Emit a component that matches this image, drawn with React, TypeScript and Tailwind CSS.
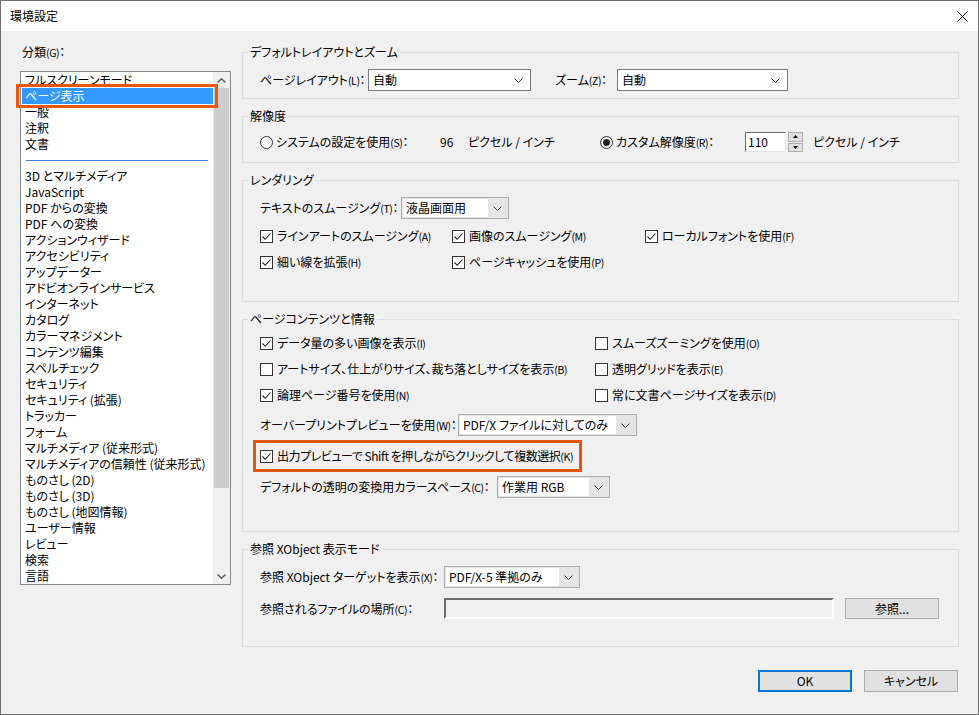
import type { ReactNode } from 'react';

// renders a label, shrinking the "(X)" access-key part like the Windows UI font does
function Lbl({ t }: { t: string }) {
  const m = t.match(/^(.*)\(([A-Z])\)(.*)$/);
  if (!m) return <>{t}</>;
  return (
    <>
      {m[1]}
      <span className="text-[10.5px] tracking-[-0.4px]">({m[2]})</span>
      {m[3]}
    </>
  );
}

const Chevron = () => (
  <svg width="9" height="5" viewBox="0 0 9 5" fill="none" stroke="#404040" strokeWidth="1">
    <path d="M0.5 0.5L4.5 4.5L8.5 0.5" />
  </svg>
);

function Check({ on, label }: { on?: boolean; label: string }) {
  return (
    <div className="flex h-[18px] items-center gap-[4px]">
      <span className="flex h-[13px] w-[13px] shrink-0 items-center justify-center border border-[#333] bg-white">
        {on && (
          <svg width="11" height="11" viewBox="0 0 11 11" fill="none" stroke="#222" strokeWidth="1.1">
            <path d="M1.5 5.5L4.2 8.3L9.5 2.5" />
          </svg>
        )}
      </span>
      <span className="whitespace-nowrap">
        <Lbl t={label} />
      </span>
    </div>
  );
}

function Radio({ on, label }: { on?: boolean; label: string }) {
  return (
    <div className="flex items-center gap-[3px]">
      <span className="flex h-[13px] w-[13px] shrink-0 items-center justify-center rounded-full border border-[#333] bg-white">
        {on && <span className="h-[7px] w-[7px] rounded-full bg-[#222]" />}
      </span>
      <span className="whitespace-nowrap">
        <Lbl t={label} />
      </span>
    </div>
  );
}

function WhiteSelect({ value, w }: { value: string; w: string }) {
  return (
    <div className={`flex h-[22px] items-center border border-[#7a7a7a] bg-white pl-[4px] pr-[7px] ${w}`}>
      <span className="flex-1 whitespace-nowrap">{value}</span>
      <Chevron />
    </div>
  );
}

function GraySelect({ value, w }: { value: string; w: string }) {
  return (
    <div className={`flex h-[22px] border border-[#adadad] bg-[#e5e5e5] p-[1px] ${w}`}>
      <span className="flex flex-1 items-center whitespace-nowrap bg-white pl-[3px]">{value}</span>
      <span className="flex w-[19px] items-center justify-center">
        <Chevron />
      </span>
    </div>
  );
}

function Group({ title, h, children }: { title: string; h: string; children: ReactNode }) {
  return (
    <fieldset className={`border border-[#dcdcdc] ${h}`}>
      <legend className="ml-[5px] px-[2px] leading-4">{title}</legend>
      <div className="pl-[17px]">{children}</div>
    </fieldset>
  );
}

function FieldLabel({ t, w }: { t: string; w: string }) {
  return (
    <span className={`whitespace-nowrap ${w}`}>
      <Lbl t={t} />
    </span>
  );
}

const categories = [
  '3D とマルチメディア',
  'JavaScript',
  'PDF からの変換',
  'PDF への変換',
  'アクションウィザード',
  'アクセシビリティ',
  'アップデーター',
  'アドビオンラインサービス',
  'インターネット',
  'カタログ',
  'カラーマネジメント',
  'コンテンツ編集',
  'スペルチェック',
  'セキュリティ',
  'セキュリティ (拡張)',
  'トラッカー',
  'フォーム',
  'マルチメディア (従来形式)',
  'マルチメディアの信頼性 (従来形式)',
  'ものさし (2D)',
  'ものさし (3D)',
  'ものさし (地図情報)',
  'ユーザー情報',
  'レビュー',
  '検索',
  '言語',
];

function CategoryList() {
  return (
    <div className="relative flex h-[514px] w-[211px] border border-[#828790] bg-white">
      <div className="flex-1 overflow-hidden">
        <div className="flex h-4 items-center pb-px pl-[4px] leading-4">フルスクリーンモード</div>
        <div className="ml-px flex h-4 items-center bg-[#3399ff] pb-px pl-[3px] leading-4 text-white">ページ表示</div>
        <div className="flex h-4 items-center pb-px pl-[4px] leading-4">一般</div>
        <div className="flex h-4 items-center pb-px pl-[4px] leading-4">注釈</div>
        <div className="flex h-4 items-center pb-px pl-[4px] leading-4">文書</div>
        <div className="flex h-4 items-center pl-[5px] pr-[5px]">
          <div className="h-px w-full bg-[#3b7fd4]" />
        </div>
        {categories.map((c) => (
          <div key={c} className="flex h-4 items-center whitespace-nowrap pb-px pl-[4px] leading-4">
            {c}
          </div>
        ))}
      </div>
      {/* scrollbar */}
      <div className="flex w-[17px] flex-col bg-[#f0f0f0]">
        <div className="flex h-[16px] items-center justify-center">
          <svg width="9" height="5" viewBox="0 0 9 5" fill="none" stroke="#555" strokeWidth="1.4">
            <path d="M0.5 4.5L4.5 0.8L8.5 4.5" />
          </svg>
        </div>
        <div className="mx-px h-[400px] bg-[#cdcdcd]" />
        <div className="flex-1" />
        <div className="flex h-[16px] items-center justify-center">
          <svg width="9" height="5" viewBox="0 0 9 5" fill="none" stroke="#555" strokeWidth="1.4">
            <path d="M0.5 0.5L4.5 4.2L8.5 0.5" />
          </svg>
        </div>
      </div>
      {/* highlight */}
      <div className="absolute left-[-5px] top-[12px] h-[24px] w-[202px] border-[3px] border-[#e8570e]" />
    </div>
  );
}

export default function App() {
  return (
    <div className="flex h-[715px] w-[979px] flex-col border border-[#6e6e6e] bg-[#f0f0f0] font-['Noto_Sans_CJK_JP','Noto_Sans',sans-serif] text-[12px] text-black [font-feature-settings:'palt']">
      {/* title bar */}
      <div className="flex h-[30px] shrink-0 items-center justify-between bg-white pl-[9px] pr-[10px]">
        <span className="leading-4">環境設定</span>
        <svg width="11" height="11" viewBox="0 0 11 11" fill="none" stroke="#111" strokeWidth="1">
          <path d="M0.5 0.5L10.5 10.5M10.5 0.5L0.5 10.5" />
        </svg>
      </div>

      <div className="flex pl-[19px] pt-[13px]">
        {/* left column */}
        <div className="flex w-[212px] flex-col">
          <div className="mb-[10px] pl-[2px] leading-4">
            <Lbl t="分類(G)：" />
          </div>
          <CategoryList />
        </div>

        {/* right column */}
        <div className="ml-[10px] flex w-[717px] flex-col gap-[9px]">
          <Group title="デフォルトレイアウトとズーム" h="h-[55px]">
            <div className="mt-[9px] flex h-[22px] items-center">
              <FieldLabel t="ページレイアウト(L)：" w="w-[108px]" />
              <WhiteSelect value="自動" w="w-[163px]" />
              <FieldLabel t="ズーム(Z)：" w="ml-[24px] w-[62px]" />
              <WhiteSelect value="自動" w="w-[171px]" />
            </div>
          </Group>

          <Group title="解像度" h="h-[55px]">
            <div className="mt-[7px] flex h-[22px] items-center">
              <div className="w-[180px]">
                <Radio label="システムの設定を使用(S)：" />
              </div>
              <span className="w-[28px]">96</span>
              <span className="w-[132px]">ピクセル / インチ</span>
              <div className="w-[145px]">
                <Radio on label="カスタム解像度(R)：" />
              </div>
              <div className="flex h-[20px] w-[41px] items-center border border-b-[#e3e3e3] border-l-[#6d6d6d] border-r-[#e3e3e3] border-t-[#6d6d6d] bg-white pl-[2px]">
                110
              </div>
              <div className="ml-[2px] flex h-[20px] w-[15px] flex-col gap-px">
                <div className="flex flex-1 items-center justify-center border border-[#adadad] bg-[#e1e1e1]">
                  <svg width="5" height="3" viewBox="0 0 5 3" fill="#000">
                    <path d="M0 3L2.5 0L5 3Z" />
                  </svg>
                </div>
                <div className="flex flex-1 items-center justify-center border border-[#adadad] bg-[#e1e1e1]">
                  <svg width="5" height="3" viewBox="0 0 5 3" fill="#000">
                    <path d="M0 0L2.5 3L5 0Z" />
                  </svg>
                </div>
              </div>
              <span className="ml-[10px]">ピクセル / インチ</span>
            </div>
          </Group>

          <Group title="レンダリング" h="h-[130px]">
            <div className="mt-[9px] flex h-[22px] items-center">
              <FieldLabel t="テキストのスムージング(T)：" w="w-[141px]" />
              <GraySelect value="液晶画面用" w="w-[108px]" />
            </div>
            <div className="mt-[8px] grid grid-cols-[192px_193px_auto] gap-y-[8px]">
              <Check on label="ラインアートのスムージング(A)" />
              <Check on label="画像のスムージング(M)" />
              <Check on label="ローカルフォントを使用(F)" />
              <Check on label="細い線を拡張(H)" />
              <Check on label="ページキャッシュを使用(P)" />
            </div>
          </Group>

          <Group title="ページコンテンツと情報" h="h-[221px]">
            <div className="mt-[7px] grid grid-cols-[335px_auto] gap-y-[8px]">
              <Check on label="データ量の多い画像を表示(I)" />
              <Check label="スムーズズーミングを使用(O)" />
              <Check label="アートサイズ、仕上がりサイズ、裁ち落としサイズを表示(B)" />
              <Check label="透明グリッドを表示(E)" />
              <Check on label="論理ページ番号を使用(N)" />
              <Check label="常に文書ページサイズを表示(D)" />
            </div>
            <div className="mt-[10px] flex h-[22px] items-center">
              <FieldLabel t="オーバープリントプレビューを使用(W)：" w="w-[198px]" />
              <GraySelect value="PDF/X ファイルに対してのみ" w="w-[179px]" />
            </div>
            <div className="-ml-[7px] mt-[4px] flex h-[32px] w-[329px] items-center border-[3px] border-[#e8570e] pl-[4px] tracking-[-0.45px]">
              <Check on label="出力プレビューで Shift を押しながらクリックして複数選択(K)" />
            </div>
            <div className="mt-[4px] flex h-[22px] items-center">
              <FieldLabel t="デフォルトの透明の変換用カラースペース(C)：" w="w-[237px]" />
              <GraySelect value="作業用 RGB" w="w-[113px]" />
            </div>
          </Group>

          <Group title="参照 XObject 表示モード" h="h-[106px]">
            <div className="mt-[9px] flex h-[22px] items-center">
              <FieldLabel t="参照 XObject ターゲットを表示(X)：" w="w-[184px]" />
              <GraySelect value="PDF/X-5 準拠のみ" w="w-[136px]" />
            </div>
            <div className="mt-[10px] flex h-[21px] items-center">
              <FieldLabel t="参照されるファイルの場所(C)：" w="w-[184px]" />
              <div className="h-[21px] w-[390px] border-2 border-b-white border-l-[#6d6d6d] border-r-white border-t-[#6d6d6d] bg-[#f0f0f0]" />
              <button className="ml-[11px] h-[21px] w-[94px] border border-[#adadad] bg-[#e1e1e1] leading-4">参照...</button>
            </div>
          </Group>

          <div className="mt-[14px] flex justify-end gap-[12px] pr-px">
            <button className="h-[22px] w-[94px] border-2 border-[#0078d7] bg-[#e1e1e1] leading-4">OK</button>
            <button className="h-[22px] w-[94px] border border-[#adadad] bg-[#e1e1e1] leading-4">キャンセル</button>
          </div>
        </div>
      </div>
    </div>
  );
}
